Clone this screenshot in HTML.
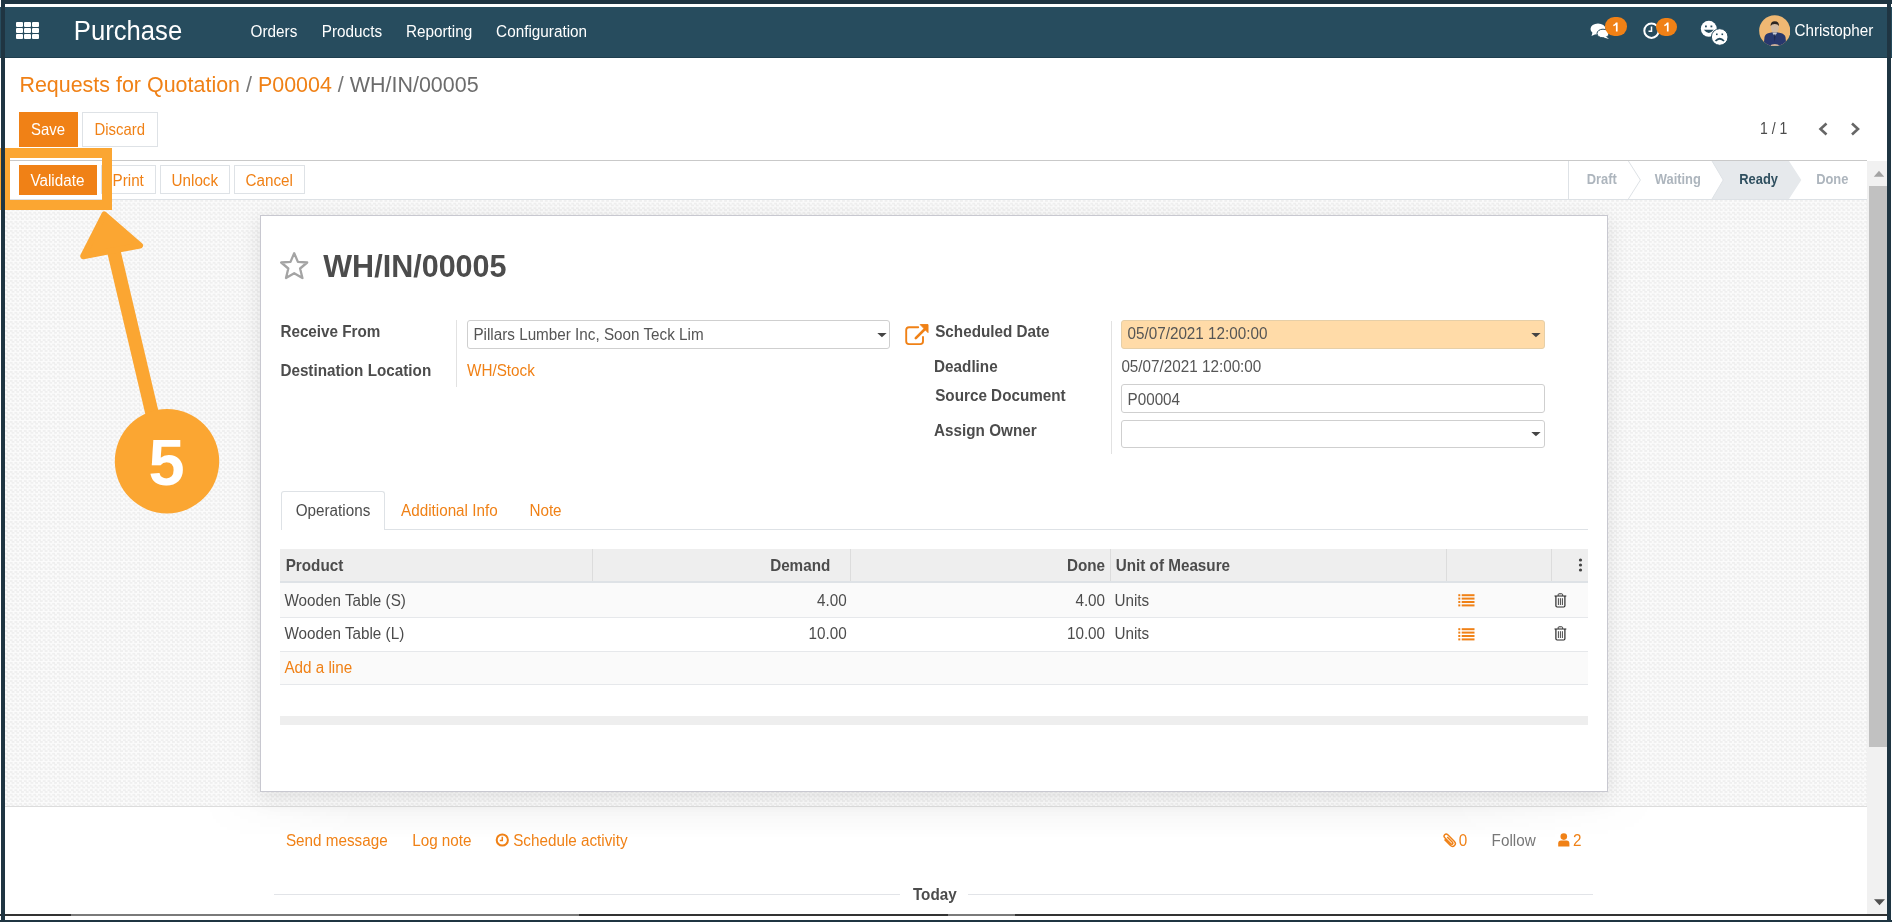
<!DOCTYPE html>
<html><head><meta charset="utf-8">
<style>
*{margin:0;padding:0;box-sizing:border-box}
html,body{width:1892px;height:922px;overflow:hidden;background:#fff;position:relative;font-family:"Liberation Sans",sans-serif;color:#4c4c4c}
.a{position:absolute}
.t{position:absolute;line-height:1;white-space:nowrap;font-size:15.25px;transform-origin:0 0.8465em;transform:scaleY(1.12)}
.L{transform:scaleY(1.05)}
.b{font-weight:bold}
.o{color:#f08116}
.r{text-align:right}
</style></head><body>

<!-- navbar -->
<div class="a" style="left:0;top:4px;width:1892px;height:3px;background:#fff"></div>
<div class="a" style="left:0;top:6.5px;width:1892px;height:50.5px;background:#274c5e"></div>
<div class="a" style="left:0;top:57px;width:1892px;height:1px;background:#1f3f4f"></div>


<!-- grid icon -->
<div class="a" style="left:16.3px;top:21.8px;width:23px;height:17.5px">
 <div class="a" style="left:0;top:0;width:6.8px;height:5px;background:#fff;border-radius:1px"></div>
 <div class="a" style="left:7.8px;top:0;width:6.8px;height:5px;background:#fff;border-radius:1px"></div>
 <div class="a" style="left:15.6px;top:0;width:6.8px;height:5px;background:#fff;border-radius:1px"></div>
 <div class="a" style="left:0;top:6.2px;width:6.8px;height:5px;background:#fff;border-radius:1px"></div>
 <div class="a" style="left:7.8px;top:6.2px;width:6.8px;height:5px;background:#fff;border-radius:1px"></div>
 <div class="a" style="left:15.6px;top:6.2px;width:6.8px;height:5px;background:#fff;border-radius:1px"></div>
 <div class="a" style="left:0;top:12.4px;width:6.8px;height:5px;background:#fff;border-radius:1px"></div>
 <div class="a" style="left:7.8px;top:12.4px;width:6.8px;height:5px;background:#fff;border-radius:1px"></div>
 <div class="a" style="left:15.6px;top:12.4px;width:6.8px;height:5px;background:#fff;border-radius:1px"></div>
</div>
<div class="t L" style="left:73.8px;top:19px;font-size:25.66px;color:#fff">Purchase</div>
<div class="t" style="left:250.6px;top:24.25px;font-size:15.3px;color:#fff">Orders</div>
<div class="t" style="left:321.7px;top:24.25px;font-size:15.3px;color:#fff">Products</div>
<div class="t" style="left:405.9px;top:24.25px;font-size:15.3px;color:#fff">Reporting</div>
<div class="t" style="left:496.1px;top:24.25px;font-size:15.3px;color:#fff">Configuration</div>

<!-- systray -->
<svg class="a" style="left:1590px;top:22px" width="20" height="18" viewBox="0 0 20 18">
 <ellipse cx="8" cy="7" rx="7.5" ry="5.6" fill="#fff"/>
 <path d="M2.5 10.5 L1.5 14 L6.5 11.8Z" fill="#fff"/>
 <ellipse cx="13" cy="11.5" rx="6" ry="4.3" fill="#fff" stroke="#274c5e" stroke-width="1"/>
 <path d="M16 14.5 L19 17 L13.5 15.5Z" fill="#fff"/>
</svg>
<div class="a" style="left:1604.5px;top:17.2px;width:22.4px;height:18.6px;border-radius:9.3px;background:#f08116"></div>
<svg class="a" style="left:1611.5px;top:21.8px" width="8" height="10" viewBox="0 0 8 10"><path d="M3.9 0.4 H5.6 V9.6 H3.9 V2.9 Q2.8 3.8 1.3 4.3 V2.7 Q3.1 2 3.9 0.4Z" fill="#fff"/></svg>
<svg class="a" style="left:1643px;top:21.5px" width="18" height="18" viewBox="0 0 18 18">
 <circle cx="8.5" cy="8.7" r="7.2" fill="none" stroke="#fff" stroke-width="2"/>
 <path d="M8.5 4.5 V9.2 H5.5" fill="none" stroke="#fff" stroke-width="1.5"/>
</svg>
<div class="a" style="left:1656.1px;top:18px;width:21px;height:17.8px;border-radius:9px;background:#f08116"></div>
<svg class="a" style="left:1662.8px;top:22.3px" width="8" height="10" viewBox="0 0 8 10"><path d="M3.9 0.4 H5.6 V9.6 H3.9 V2.9 Q2.8 3.8 1.3 4.3 V2.7 Q3.1 2 3.9 0.4Z" fill="#fff"/></svg>
<svg class="a" style="left:1700px;top:20px" width="30" height="26" viewBox="0 0 30 26">
 <circle cx="8.8" cy="8.8" r="8" fill="#fff"/>
 <rect x="5" y="5.5" width="1.8" height="1.8" fill="#274c5e"/><rect x="10.5" y="5.5" width="1.8" height="1.8" fill="#274c5e"/>
 <path d="M3.8 9.8 Q8.8 16 13.8 9.8Z" fill="#274c5e"/>
 <circle cx="19.7" cy="17" r="8.3" fill="#fff" stroke="#274c5e" stroke-width="1"/>
 <rect x="16" y="13.5" width="1.6" height="1.6" fill="#274c5e"/><rect x="21.5" y="13.5" width="1.6" height="1.6" fill="#274c5e"/>
 <path d="M15.5 21 Q19.7 16.5 24 21" fill="none" stroke="#274c5e" stroke-width="1.8"/>
</svg>
<svg class="a" style="left:1758.9px;top:14.6px" width="31.5" height="31.7" viewBox="0 0 31.5 31.7">
 <defs><clipPath id="av"><circle cx="15.75" cy="15.85" r="15.6"/></clipPath></defs>
 <g clip-path="url(#av)">
 <rect width="32" height="32" fill="#efb873"/>
 <path d="M4.5 32 L5.5 22 Q6.5 18.6 10 18 L13.5 17.2 L18 17.2 L21.5 18 Q25.5 18.8 26.5 22 L27.5 32Z" fill="#28386d"/>
 <path d="M13.2 17.4 L15.8 21.5 L18.3 17.4Z" fill="#c8ccd8"/>
 <path d="M15 19.5 L15.8 27 L16.6 19.5Z" fill="#1b2540"/>
 <ellipse cx="15.8" cy="12.6" rx="4" ry="5" fill="#d3bba3"/>
 <path d="M11.6 11 Q11.4 6.4 15.8 6.3 Q20.2 6.4 20 11 Q19 8.9 15.8 8.9 Q12.6 8.9 11.6 11Z" fill="#2b2522"/>
 <ellipse cx="15.8" cy="30.5" rx="4" ry="1.6" fill="#c9ad98"/>
 </g>
</svg>
<div class="t" style="left:1794.4px;top:23.2px;color:#fff">Christopher</div>


<!-- breadcrumb -->
<div class="t L" style="left:19.4px;top:74.83px;font-size:21.46px"><span class="o">Requests for Quotation</span> <span style="color:#777">/</span> <span class="o">P00004</span> <span style="color:#777">/</span> <span style="color:#6c6c6c">WH/IN/00005</span></div>

<!-- save discard -->
<div class="a" style="left:19px;top:112px;width:59px;height:35px;background:#f08116"></div>
<div class="t" style="left:31px;top:122.77px;font-size:14.92px;color:#fff">Save</div>
<div class="a" style="left:82px;top:112px;width:76px;height:35px;border:1px solid #dee2e6"></div>
<div class="t" style="left:94.5px;top:122.77px;font-size:14.92px" class="o"><span class="o">Discard</span></div>

<!-- pager -->
<div class="t" style="left:1760px;top:121.59px;font-size:14px;color:#4c4c4c">1 / 1</div>
<svg class="a" style="left:1817px;top:121px" width="46" height="16" viewBox="0 0 46 16">
 <path d="M9.5 2.5 L3.5 8 L9.5 13.5" fill="none" stroke="#666" stroke-width="2.6"/>
 <path d="M35 2.5 L41 8 L35 13.5" fill="none" stroke="#666" stroke-width="2.6"/>
</svg>

<!-- statusbar -->
<div class="a" style="left:5px;top:160px;width:1862px;height:1px;background:#c9c9c9"></div>
<div class="a" style="left:5px;top:199px;width:1862px;height:1px;background:#dde1e5"></div>
<div class="a" style="left:19px;top:165px;width:77.5px;height:29.5px;background:#f08116"></div>
<div class="t" style="left:30.4px;top:172.79px;color:#fff">Validate</div>
<div class="a" style="left:100.6px;top:165.3px;width:55.1px;height:29.2px;border:1px solid #dee2e6"></div>
<div class="t o" style="left:112.5px;top:172.79px">Print</div>
<div class="a" style="left:160px;top:165.3px;width:69.6px;height:29.2px;border:1px solid #dee2e6"></div>
<div class="t o" style="left:171.5px;top:172.79px">Unlock</div>
<div class="a" style="left:233.8px;top:165.3px;width:70.8px;height:29.2px;border:1px solid #dee2e6"></div>
<div class="t o" style="left:245.5px;top:172.79px">Cancel</div>

<svg class="a" style="left:1568px;top:161px" width="300" height="38" viewBox="0 0 300 38">
 <path d="M144 0 L221 0 L233.3 19 L221 38 L144 38 L155.2 19Z" fill="#e6e9ec"/>
 <path d="M0.5 0 V38" stroke="#dee2e6" stroke-width="1"/>
 <path d="M60.4 0 L72.4 19 L60.4 38" fill="none" stroke="#dee2e6" stroke-width="1"/>
 <path d="M144 0 L155.2 19 L144 38" fill="none" stroke="#dee2e6" stroke-width="1"/>
</svg>
<div class="t b" style="left:1586.7px;top:173.88px;font-size:12.9px;color:#adb5bd">Draft</div>
<div class="t b" style="left:1654.8px;top:173.88px;font-size:12.9px;color:#adb5bd">Waiting</div>
<div class="t b" style="left:1739.3px;top:173.88px;font-size:12.9px;color:#2f4f5f">Ready</div>
<div class="t b" style="left:1816.2px;top:173.88px;font-size:12.9px;color:#adb5bd">Done</div>

<!-- background -->
<div class="a" style="left:5px;top:200px;width:1862.4px;height:606px;background-color:#f5f5f5;background-image:repeating-conic-gradient(#efefef 0 25%,#fbfbfb 0 50%);background-size:4.72px 4.56px"></div>
<div class="a" style="left:5px;top:805.5px;width:1862.4px;height:1px;background:#dcdcdc"></div>

<!-- sheet -->
<div class="a" style="left:260px;top:215px;width:1348px;height:577px;background:#fff;border:1px solid #c8c8d0;box-shadow:0 5px 20px rgba(0,0,0,0.1)"></div>

<svg class="a" style="left:279px;top:251px" width="31" height="29" viewBox="0 0 31 29">
 <path d="M15.2 2.2 L18.9 10.9 L28.2 11.5 L21.1 17.5 L23.4 27 L15.2 22.2 L7 27 L9.3 17.5 L2.2 11.5 L11.5 10.9Z" fill="none" stroke="#a4a4a4" stroke-width="2.3" stroke-linejoin="round"/>
</svg>
<div class="t b L" style="left:323.3px;top:251.35px;font-size:30.54px;color:#4c4c4c">WH/IN/00005</div>

<div class="t b" style="left:280.4px;top:323.79px">Receive From</div>
<div class="t b" style="left:280.4px;top:363.49px">Destination Location</div>
<div class="a" style="left:456px;top:320px;width:1px;height:67px;background:#e2e2e2"></div>
<div class="a" style="left:466.9px;top:320.4px;width:423.6px;height:28.4px;border:1px solid #cfcfcf;border-radius:3px"></div>
<div class="t" style="left:473.4px;top:326.59px;color:#555">Pillars Lumber Inc, Soon Teck Lim</div>
<svg class="a" style="left:876px;top:332px" width="12" height="6" viewBox="0 0 12 6"><path d="M1.3 1 H10.6 L5.95 5.2Z" fill="#444"/></svg>
<div class="t o" style="left:467px;top:363.49px">WH/Stock</div>

<svg class="a" style="left:904px;top:323px" width="26" height="23" viewBox="0 0 26 23">
 <path d="M14.2 4.2 H5 Q2.2 4.2 2.2 7 V18.3 Q2.2 21.1 5 21.1 H16.2 Q19 21.1 19 18.3 V14" fill="none" stroke="#f08116" stroke-width="1.9" stroke-linecap="round"/>
 <path d="M11.8 15.2 L21 6" stroke="#f08116" stroke-width="2.6" stroke-linecap="round"/>
 <path d="M16.2 1.6 H24 V9.6Z" fill="#f08116" stroke="#f08116" stroke-width="1" stroke-linejoin="round"/>
</svg>

<div class="t b" style="left:935.2px;top:324.09px">Scheduled Date</div>
<div class="t b" style="left:934.1px;top:359.19px">Deadline</div>
<div class="t b" style="left:935.2px;top:388.29px">Source Document</div>
<div class="t b" style="left:934.1px;top:423.39px">Assign Owner</div>
<div class="a" style="left:1110.6px;top:320.6px;width:1px;height:133.4px;background:#e2e2e2"></div>

<div class="a" style="left:1121.4px;top:320.4px;width:423.4px;height:28.2px;border:1px solid #e6cfa8;border-radius:3px;background:#ffdba8"></div>
<div class="t" style="left:1127.5px;top:326.49px;color:#555">05/07/2021 12:00:00</div>
<svg class="a" style="left:1530px;top:332px" width="12" height="6" viewBox="0 0 12 6"><path d="M1.3 1 H10.6 L5.95 5.2Z" fill="#444"/></svg>
<div class="t" style="left:1121.4px;top:359.49px;color:#555">05/07/2021 12:00:00</div>
<div class="a" style="left:1121.4px;top:384.2px;width:423.4px;height:28.9px;border:1px solid #cfcfcf;border-radius:3px"></div>
<div class="t" style="left:1127.5px;top:391.89px;color:#555">P00004</div>
<div class="a" style="left:1121.4px;top:420px;width:423.4px;height:28.3px;border:1px solid #cfcfcf;border-radius:3px"></div>
<svg class="a" style="left:1530px;top:431px" width="12" height="6" viewBox="0 0 12 6"><path d="M1.3 1 H10.6 L5.95 5.2Z" fill="#444"/></svg>

<!-- tabs -->
<div class="a" style="left:280.5px;top:529px;width:1307.4px;height:1px;background:#dee2e6"></div>
<div class="a" style="left:280.5px;top:490.5px;width:104.2px;height:39.5px;border:1px solid #dee2e6;border-bottom:none;border-radius:3px 3px 0 0;background:#fff"></div>
<div class="t" style="left:295.7px;top:503.19px;color:#4c4c4c">Operations</div>
<div class="t o" style="left:401px;top:503.19px">Additional Info</div>
<div class="t o" style="left:529.4px;top:503.19px">Note</div>

<!-- table -->
<div class="a" style="left:280px;top:548.6px;width:1307.9px;height:32.6px;background:#eeeeee"></div>
<div class="a" style="left:280px;top:581px;width:1307.9px;height:2px;background:#dee2e6"></div>
<div class="a" style="left:592.3px;top:548.6px;width:1px;height:32.6px;background:#dcdcdc"></div>
<div class="a" style="left:850.4px;top:548.6px;width:1px;height:32.6px;background:#dcdcdc"></div>
<div class="a" style="left:1109.9px;top:548.6px;width:1px;height:32.6px;background:#dcdcdc"></div>
<div class="a" style="left:1446.1px;top:548.6px;width:1px;height:32.6px;background:#dcdcdc"></div>
<div class="a" style="left:1550.6px;top:548.6px;width:1px;height:32.6px;background:#dcdcdc"></div>
<div class="t b" style="left:285.7px;top:558.09px">Product</div>
<div class="t b r" style="left:730px;width:100.3px;top:558.09px">Demand</div>
<div class="t b r" style="left:1000px;width:105.1px;top:558.09px">Done</div>
<div class="t b" style="left:1115.7px;top:558.09px">Unit of Measure</div>
<svg class="a" style="left:1578px;top:557px" width="5" height="16" viewBox="0 0 5 16"><circle cx="2.5" cy="3" r="1.6" fill="#444"/><circle cx="2.5" cy="8" r="1.6" fill="#444"/><circle cx="2.5" cy="13" r="1.6" fill="#444"/></svg>

<div class="a" style="left:280px;top:583px;width:1307.9px;height:34px;background:#fafafa"></div>
<div class="a" style="left:280px;top:617px;width:1307.9px;height:1px;background:#e6e8eb"></div>
<div class="a" style="left:280px;top:650.6px;width:1307.9px;height:1px;background:#e6e8eb"></div>
<div class="a" style="left:280px;top:651.6px;width:1307.9px;height:32px;background:#fafafa"></div>
<div class="a" style="left:280px;top:683.6px;width:1307.9px;height:1px;background:#e6e8eb"></div>

<div class="t" style="left:284.4px;top:593.09px">Wooden Table (S)</div>
<div class="t r" style="left:746.7px;width:100px;top:593.09px">4.00</div>
<div class="t r" style="left:1005.1px;width:100px;top:593.09px">4.00</div>
<div class="t" style="left:1114.4px;top:593.09px">Units</div>
<div class="t" style="left:284.4px;top:625.8px">Wooden Table (L)</div>
<div class="t r" style="left:746.7px;width:100px;top:625.8px">10.00</div>
<div class="t r" style="left:1005.1px;width:100px;top:625.8px">10.00</div>
<div class="t" style="left:1114.4px;top:625.8px">Units</div>
<div class="t o" style="left:284.4px;top:660.39px">Add a line</div>

<svg class="a" style="left:1457.5px;top:594px" width="17" height="13" viewBox="0 0 17 13">
 <g fill="#f08116"><rect x="0.3" y="0.2" width="2" height="2"/><rect x="3.7" y="0.2" width="12.8" height="2"/>
 <rect x="0.3" y="3.6" width="2" height="2"/><rect x="3.7" y="3.6" width="12.8" height="2"/>
 <rect x="0.3" y="7" width="2" height="2"/><rect x="3.7" y="7" width="12.8" height="2"/>
 <rect x="0.3" y="10.4" width="2" height="2"/><rect x="3.7" y="10.4" width="12.8" height="2"/></g>
</svg>
<svg class="a" style="left:1457.5px;top:628px" width="17" height="13" viewBox="0 0 17 13">
 <g fill="#f08116"><rect x="0.3" y="0.2" width="2" height="2"/><rect x="3.7" y="0.2" width="12.8" height="2"/>
 <rect x="0.3" y="3.6" width="2" height="2"/><rect x="3.7" y="3.6" width="12.8" height="2"/>
 <rect x="0.3" y="7" width="2" height="2"/><rect x="3.7" y="7" width="12.8" height="2"/>
 <rect x="0.3" y="10.4" width="2" height="2"/><rect x="3.7" y="10.4" width="12.8" height="2"/></g>
</svg>
<svg class="a" style="left:1554px;top:592.5px" width="13" height="15" viewBox="0 0 13 15">
 <path d="M0.5 3 H12.3" stroke="#333" stroke-width="1.1"/>
 <path d="M4.2 2.8 V1.6 Q4.2 0.8 5 0.8 H7.8 Q8.6 0.8 8.6 1.6 V2.8" fill="none" stroke="#333" stroke-width="1"/>
 <path d="M1.9 3 V12.8 Q1.9 14 3.1 14 H9.7 Q10.9 14 10.9 12.8 V3" fill="none" stroke="#2a2a2a" stroke-width="1.2"/>
 <path d="M4.4 5.2 V12 M6.4 5.2 V12 M8.4 5.2 V12" stroke="#333" stroke-width="0.9"/>
</svg>
<svg class="a" style="left:1554px;top:625.5px" width="13" height="15" viewBox="0 0 13 15">
 <path d="M0.5 3 H12.3" stroke="#333" stroke-width="1.1"/>
 <path d="M4.2 2.8 V1.6 Q4.2 0.8 5 0.8 H7.8 Q8.6 0.8 8.6 1.6 V2.8" fill="none" stroke="#333" stroke-width="1"/>
 <path d="M1.9 3 V12.8 Q1.9 14 3.1 14 H9.7 Q10.9 14 10.9 12.8 V3" fill="none" stroke="#2a2a2a" stroke-width="1.2"/>
 <path d="M4.4 5.2 V12 M6.4 5.2 V12 M8.4 5.2 V12" stroke="#333" stroke-width="0.9"/>
</svg>

<div class="a" style="left:279.8px;top:715.9px;width:1308.1px;height:9.2px;background:#eeeeee"></div>

<!-- chatter -->
<div class="a" style="left:200px;top:806.5px;width:1460px;height:32px;background:linear-gradient(rgba(0,0,0,0.035),rgba(0,0,0,0));-webkit-mask-image:linear-gradient(to right,transparent,#000 160px,#000 1250px,transparent)"></div>
<div class="t o" style="left:285.9px;top:832.99px">Send message</div>
<div class="t o" style="left:412.2px;top:832.99px">Log note</div>
<svg class="a" style="left:494.5px;top:833px" width="15" height="14" viewBox="0 0 15 14">
 <circle cx="7.3" cy="7" r="5.6" fill="none" stroke="#f08116" stroke-width="2"/>
 <path d="M7.3 3.8 V7.4 H4.8" fill="none" stroke="#f08116" stroke-width="1.5"/>
</svg>
<div class="t o" style="left:513.2px;top:832.99px">Schedule activity</div>

<svg class="a" style="left:1441px;top:833px;transform:scaleX(-1)" width="16" height="15" viewBox="0 0 16 15">
 <path d="M12.5 6.5 L6.8 12.2 Q4.5 14.5 2.5 12.5 Q0.5 10.5 2.8 8.2 L9.2 1.8 Q10.8 0.2 12.3 1.7 Q13.8 3.2 12.2 4.8 L6.2 10.8 Q5.3 11.7 4.5 10.9 Q3.7 10.1 4.6 9.2 L9.8 4" fill="none" stroke="#f08116" stroke-width="1.5"/>
</svg>
<div class="t o" style="left:1458.8px;top:832.99px">0</div>
<div class="t" style="left:1491.6px;top:832.99px;color:#777">Follow</div>
<svg class="a" style="left:1558px;top:833px" width="12" height="14" viewBox="0 0 12 14">
 <circle cx="5.8" cy="3.6" r="3.3" fill="#f08116"/>
 <path d="M0.2 13.5 V10.5 Q0.2 7.6 3 7.6 H8.6 Q11.4 7.6 11.4 10.5 V13.5Z" fill="#f08116"/>
</svg>
<div class="t o" style="left:1573px;top:832.99px">2</div>

<div class="a" style="left:274px;top:893.5px;width:625.6px;height:1px;background:#e2e4e8"></div>
<div class="a" style="left:967.8px;top:893.5px;width:625.6px;height:1px;background:#e2e4e8"></div>
<div class="t b" style="left:912.9px;top:886.69px;color:#4c4c4c">Today</div>

<!-- bottom taskbar line -->
<div class="a" style="left:0;top:914px;width:1887px;height:1.8px;background:#333"></div>
<div class="a" style="left:71px;top:914px;width:508px;height:1.8px;background:#7a7a7a"></div>
<div class="a" style="left:948px;top:914px;width:66.6px;height:1.8px;background:#7a7a7a"></div>

<!-- scrollbar -->
<div class="a" style="left:1867.4px;top:161px;width:19.6px;height:753px;background:#f1f1f1"></div>
<div class="a" style="left:1869.4px;top:186.2px;width:17.5px;height:561.3px;background:#c1c1c1"></div>
<svg class="a" style="left:1872px;top:168px" width="14" height="10" viewBox="0 0 14 10"><path d="M1.8 8.8 H12.2 L7 2.8Z" fill="#a3a3a3"/></svg>
<svg class="a" style="left:1872px;top:897px" width="14" height="10" viewBox="0 0 14 10"><path d="M2 2.2 H13 L7.5 8.2Z" fill="#505050"/></svg>

<!-- annotation -->
<div class="a" style="left:0;top:147.5px;width:112px;height:62.5px;border:10px solid #fba632;border-left-width:10px"></div>
<svg class="a" style="left:60px;top:200px" width="180" height="330" viewBox="60 200 180 330">
 <path d="M114 252 L152 413" stroke="#fba632" stroke-width="13.5" stroke-linecap="butt"/>
 <path d="M104.3 214.5 L140 245.5 L83.2 256.2Z" fill="#fba632" stroke="#fba632" stroke-width="6" stroke-linejoin="round"/>
 <circle cx="167" cy="461.2" r="52.2" fill="#fba632"/>
</svg>
<div class="t b" style="left:148.5px;top:429.98px;font-size:65px;color:#fff;transform:none">5</div>

<!-- frame borders -->
<div class="a" style="left:1px;top:0;width:1891px;height:4px;background:#1f3542"></div>
<div class="a" style="left:0;top:0;width:1px;height:6.5px;background:#fff"></div>
<div class="a" style="left:1px;top:0;width:4px;height:922px;background:#1f3542"></div>
<div class="a" style="left:1887px;top:0;width:4px;height:922px;background:#1f3542"></div>
<div class="a" style="left:0;top:919.5px;width:1892px;height:3px;background:#1f3542"></div>

</body></html>
